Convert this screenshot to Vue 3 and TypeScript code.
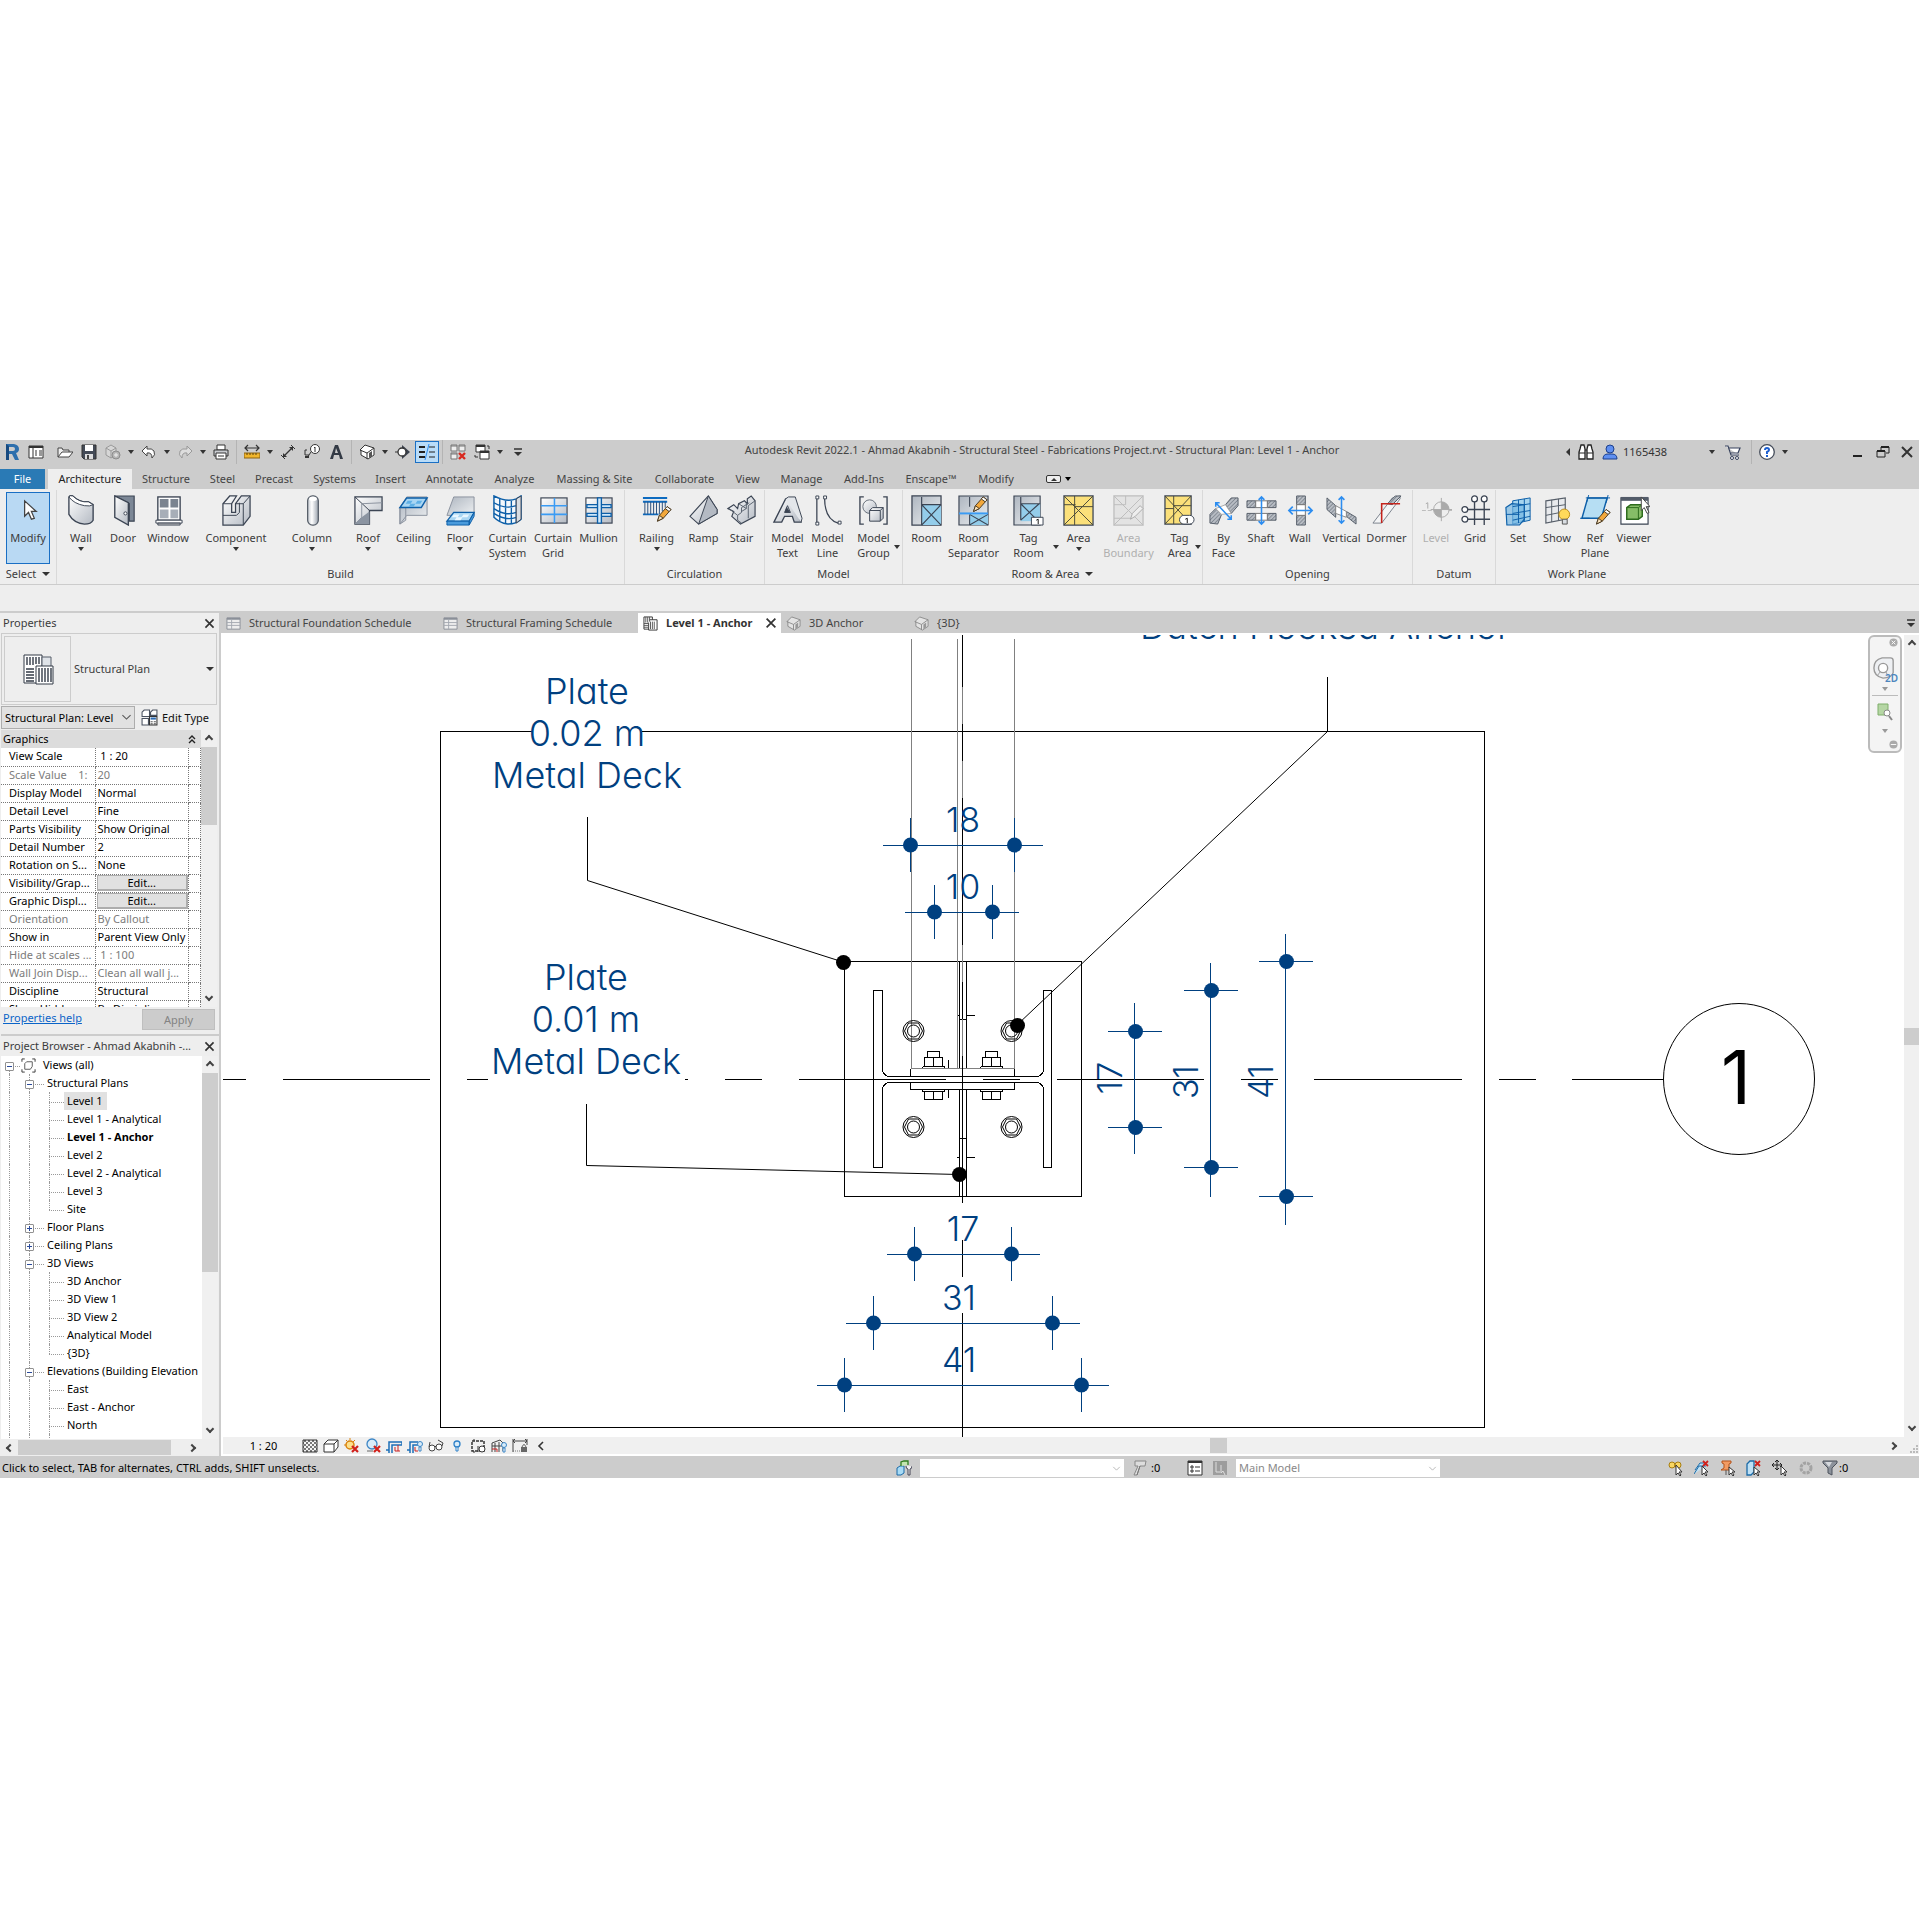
<script setup lang="ts">
import { ref } from 'vue'

interface Tool {
  label: string[]
  icon: string
  w: number
  menu?: 'below' | 'beside'
  off?: boolean
  on?: boolean
}
interface Group {
  name: string
  w: number
  menu?: boolean
  tools: Tool[]
}

const pencil = '<path d="M17 27l2-6 8-9 4 3-8 9z" fill="#f3a83b" stroke="#4a3a20"/><path d="M25 14l4 3 2-2-4-3z" fill="#fff" stroke="#4a3a20"/><path d="M19 21l4 3-6 3z" fill="#fbe3bd" stroke="#4a3a20"/>'
const slice = 'fill="url(#hatch)" stroke="#555d68"'

/* Ribbon icons, drawn on a 32 x 32 grid */
const big: Record<string, string> = {
  modify: '<path d="M12 6v16l4-4 3 7 3-1-3-7h5z" fill="#fff" stroke="#444" stroke-width="1.3"/>',
  wall: '<path d="M3 2q1-2 4-1 7 7 16 6l5 3v16q-2 4-9 4Q8 29 3 20z" fill="url(#metal)" stroke="#3b4453" stroke-width="1.4"/><path d="M3 2q1-2 4-1 7 7 16 6l5 3q-3 2-9 1Q8 9 3 2z" fill="#fff" stroke="#3b4453"/>',
  door: '<path d="M7 1h20v26h-5V9L7 1z" fill="#7c8796" stroke="#3b4453" stroke-width="1.2"/><path d="M7 1v22l14 8V8z" fill="url(#metal)" stroke="#3b4453" stroke-width="1.4"/><circle cx="18" cy="19" r="1.6" fill="#fff" stroke="#3b4453"/>',
  window: '<rect x="5" y="2" width="23" height="24" fill="#fff" stroke="#3b4453" stroke-width="1.4"/><path d="M7 4h9v9H7zM18 4h8v9h-8z" fill="#7b8490"/><path d="M7 15h9v9H7zM18 15h8v9h-8z" fill="#a7aeb8"/><path d="M3 26h27v3H3z" fill="#fff" stroke="#3b4453"/><path d="M5 29h23v2H5z" fill="#ccc" stroke="#3b4453"/>',
  component: '<path d="M2 19V9l7-8h7l-5 8v9h4V9l6-8h9v21l-7 9H2z" fill="url(#metal)" stroke="#3b4453" stroke-width="1.3"/><path d="M2 9h9M15 9h8l7-8M23 9v22M2 21h14l3-3V8" fill="none" stroke="#3b4453"/>',
  column: '<rect x="11" y="1" width="11" height="30" rx="5" fill="url(#pipe)" stroke="#555d68" stroke-width="1.3"/><ellipse cx="16.500" cy="4" rx="4" ry="2.200" fill="#fff"/>',
  roof: '<path d="M2 2h28v14H17v14H2z" fill="url(#metal)" stroke="#3b4453" stroke-width="1.3"/><path d="M2 2l15 14" stroke="#3b4453"/><path d="M9 9l21-1M9 9v14l-7 7" stroke="#8a929e" fill="none"/><path d="M9 23l8-6v13H2z" fill="#8b94a1"/>',
  ceiling: '<path d="M2 13h6v13l-6 4zM2 13L9 2h21v19H9l-7 9z" fill="url(#flat)" stroke="#8a929e"/><path d="M9 3h21l-6 10H2z" fill="#a9d6f3" stroke="#0d5fa8" stroke-width="1.5"/><path d="M10 6h5l-2 3H8zM20 6h5l-2 3h-5zM13 9h5l-2 3h-5z" fill="#5fb0e6"/>',
  floor: '<path d="M2 21L9 2h21v19z" fill="url(#flat)" stroke="#8a929e"/><path d="M2 27l7-9h21l-5 9z" fill="#a9d6f3" stroke="#0d5fa8" stroke-width="1.300"/><path d="M2 27h23v4H2zM25 27l5-9v4l-5 9z" fill="#4a9bdc" stroke="#0d5fa8"/><path d="M9 20h6l-2 3H7zM19 20h6l-2 3h-6zM12 23h6l-2 3h-6z" fill="#e8f6ff"/>',
  cursys: '<path d="M2 1q13 7 23 3l5-3v24q-5 5-14 5Q8 29 2 23z" fill="#f4f8fc" stroke="#0d5fa8" stroke-width="1.500"/><path d="M2 8q12 7 23 3M2 14q12 8 23 4M2 19q12 8 23 4M8 4v23M14 6v24M20 6v24M25 4v25" fill="none" stroke="#0d5fa8" stroke-width="1.400"/><path d="M25 4l5-3v24l-5 4z" fill="#d9dde2" stroke="#3b4453"/>',
  curgrid: '<rect x="3" y="3" width="27" height="26" fill="url(#metal)" stroke="#3b4453" stroke-width="1.200"/><path d="M3 11h27M3 20h27M17 3v26" stroke="#3a9bf4" stroke-width="1.600"/>',
  mullion: '<rect x="3" y="3" width="27" height="26" fill="url(#metal)" stroke="#3b4453" stroke-width="1.200"/><path d="M4 10h25v3H4zM4 19h25v3H4z" fill="#cfe8fb" stroke="#0d5fa8" stroke-width="1.400"/><path d="M15 3h4v26h-4z" fill="#cfe8fb" stroke="#0d5fa8" stroke-width="1.400"/>',
  railing: '<path d="M2 3h25M2 7h25M2 20h16" stroke="#0d6bc0" stroke-width="2"/><path d="M4 7v13M7 7v13M10 7v13M13 7v13M16 7v13M19 7v13M22 7v10M25 7v6" stroke="#2a4f7c" stroke-width="1"/>' + pencil,
  ramp: '<path d="M2 22L21 1l9 14v4L11 30z" fill="url(#metal)" stroke="#3b4453" stroke-width="1.200"/><path d="M21 1l9 14v4L11 30z" fill="#b4bac3" stroke="#3b4453"/>',
  stair: '<path d="M2 14l6-4 4 4 1-5 6-3 3 3v-5l4-3 4 5v16L15 30 6 22l2-5z" fill="url(#metal)" stroke="#3b4453" stroke-width="1.200"/><path d="M3 14l9 7 4-3v-5l8-5M12 21v5l4 3M13 9l8 5-5 3M21 14V8M30 6l-7 5v13" fill="none" stroke="#5a6370"/>',
  mtext: '<path d="M2 28L14 4h8l8 24h-7l-2-6h-8l-3 6z" fill="url(#metal)" stroke="#3b4453" stroke-width="1.400"/><path d="M14 4l3-2h7l7 22-1 4M16 11l-3 7h6z" fill="#e3e6ea" stroke="#3b4453"/><path d="M15 12l-2 6h6z" fill="#3b4453"/>',
  mline: '<path d="M5 3v26M13 3q0 22 14 26" fill="none" stroke="#3b4453" stroke-width="1.300"/><path d="M4 1h3v3H4zM4 28h3v3H4zM12 1h3v3h-3zM27 27h3v3h-3z" fill="#fff" stroke="#3b4453"/>',
  mgroup: '<path d="M6 2H2v28h4M26 2h4v28h-4" fill="none" stroke="#3b4453" stroke-width="1.400"/><circle cx="12" cy="12" r="7" fill="url(#metal)" stroke="#666e7a"/><path d="M12 16l3-3h11v11l-3 3H12z" fill="url(#metal)" stroke="#3b4453"/><path d="M12 16h11v11M23 16l3-3" fill="none" stroke="#3b4453"/>',
  room: '<path d="M1 1h30v30H1z" fill="url(#flat)" stroke="#3b4453" stroke-width="1.300"/><path d="M11 10h20v21H11z" fill="#94cdea"/><path d="M11 2v29M11 10h20M11 10l20 21M31 10L11 31" stroke="#3b4453" stroke-width="1.200"/>',
  roomsep: '<path d="M1 1h30v30H1z" fill="url(#flat)" stroke="#3b4453" stroke-width="1.200"/><path d="M12 20h19v11H12z" fill="#94cdea"/><path d="M12 2v10M12 20l19 11M31 20L12 31M12 20v11" stroke="#3b4453" stroke-width="1.100"/><path d="M1 19h30" stroke="#3a9bf4" stroke-width="2"/><g transform="translate(-1 -10)">' + pencil + '</g>',
  roomtag: '<path d="M1 1h27v30H1z" fill="url(#flat)" stroke="#3b4453" stroke-width="1.200"/><path d="M8 9h20v18H8z" fill="#94cdea"/><path d="M8 2v24M8 9h20M8 9l18 18M27 9L8 26" stroke="#3b4453" stroke-width="1.200"/><path d="M19 23h12v8H19z" fill="#fff" stroke="#3b4453"/><path d="M24 26l2-1v5" stroke="#111" fill="none"/>',
  area: '<path d="M1 1h30v30H1z" fill="#fbe07a" stroke="#3b4453" stroke-width="1.300"/><path d="M1 1l30 30M31 1L1 31M12 1v11h19M12 12v19M1 10h12" stroke="#4a4a3a" fill="none"/>',
  areabound: '<path d="M1 1h30v30H1z" fill="#e3e3e3" stroke="#bdbdbd" stroke-width="1.300"/><path d="M1 1l30 30M31 1L1 31M1 10h12V1M1 24h18" stroke="#bdbdbd" fill="none"/><path d="M18 25l2-6 8-8 3 3-8 8z" fill="#eee" stroke="#aaa"/>',
  areatag: '<path d="M1 1h27v29H1z" fill="#fbe07a" stroke="#3b4453" stroke-width="1.300"/><path d="M1 1l27 29M28 1L1 30M10 1v29M10 11h18M1 14h9" stroke="#4a4a3a" fill="none"/><rect x="16" y="21" width="15" height="9" rx="4.500" fill="#fff" stroke="#3b4453"/><path d="M22 25l2-1v5" stroke="#111" fill="none"/>',
  byface: `<path d="M2 29v-9l6-6 6 6-4 10z" ${slice}/><path d="M18 10l6-7h7v8l-7 8z" ${slice}/><path d="M8 14l10-4 6 9-10 1z" fill="#fff" stroke="#aaa"/><path d="M8 8l16 17M8 12V8h4M24 21v4h-4" fill="none" stroke="#2c8df0" stroke-width="1.600"/>`,
  shaft: `<path d="M1 6h9v7H1zM22 6h9v7h-9zM1 19h9v7H1zM22 19h9v7h-9z" ${slice}/><path d="M10 6h12v7H10zM10 19h12v7H10z" fill="#fff" stroke="#777"/><path d="M16 2v28M13 5l3-3 3 3M13 27l3 3 3-3" fill="none" stroke="#2c8df0" stroke-width="1.600"/>`,
  opwall: `<path d="M12 1h9v9h-9zM12 21h9v10h-9z" ${slice}/><path d="M12 10h9v11h-9z" fill="#fff" stroke="#777"/><path d="M4 16h24M8 12l-4 4 4 4M24 12l4 4-4 4" fill="none" stroke="#2c8df0" stroke-width="1.700"/>`,
  vertical: `<path d="M1 3l9 8v12l-9-8zM21 17l10 6v7l-10-8z" ${slice}/><path d="M10 11l11 6v6l-11-4z" fill="#fff" stroke="#888"/><path d="M16 2v27M13 5l3-3 3 3M13 26l3 3 3-3" fill="none" stroke="#2c8df0" stroke-width="1.600"/>`,
  dormer: `<path d="M2 29L22 3l8-2v3L11 29z" fill="#f3f4f5" stroke="#7b828c"/><path d="M17 9l8-8h6l-9 9z" ${slice}/><path d="M30 9H11v20" fill="none" stroke="#c4221b" stroke-width="1.600"/>`,
  level: '<path d="M1 16h13M29 16h3" stroke="#bbb" stroke-dasharray="4 2"/><path d="M5 9l2-1v6" stroke="#aaa" fill="none"/><circle cx="21" cy="15" r="8" fill="#eee" stroke="#aaa"/><path d="M21 7v8h8a8 8 0 0 0-8-8zM21 23v-8h-8a8 8 0 0 0 8 8z" fill="#aaa"/><path d="M21 3v24M10 15h22" stroke="#aaa"/>',
  grid: '<path d="M15 6v25M25 6v25M8 15h23M8 25h23" stroke="#3b4453" stroke-width="1.400"/><g fill="#fff" stroke="#3b4453" stroke-width="1.300"><circle cx="15" cy="4" r="3"/><circle cx="25" cy="4" r="3"/><circle cx="5" cy="15" r="3"/><circle cx="5" cy="25" r="3"/></g>',
  set: '<path d="M10 6l18-3v23l-18 4z" fill="#a6d5ef" stroke="#0d5fa8"/><path d="M3 13l6-4 13 1v15l-5 6H4z" fill="#75b7e3" fill-opacity=".7" stroke="#0d5fa8" stroke-width="1.200"/><path d="M16 5v24M22 4v23M10 12l18-3M10 19l18-3M3 20h14M10 26l18-4" stroke="#0d5fa8" fill="none"/>',
  show: '<path d="M4 6l20-3v22L4 29z" fill="#e8eaed" stroke="#555d68" stroke-width="1.200"/><path d="M10 5v23M17 4v22M4 13l20-3M4 21l20-4" stroke="#555d68" fill="none"/><circle cx="23" cy="20" r="5.500" fill="#ffd95a" stroke="#b88a1c"/><path d="M21 25h5v5h-5z" fill="#d8dde2" stroke="#555"/>',
  refplane: '<path d="M8 3h20l-6 21H2z" fill="#b6def3" stroke="#0d5fa8" stroke-width="1.500"/><path d="M6 3h25M0 24h10M29 0l-2 8M9 0L7 7" stroke="#0d5fa8"/><g transform="translate(0 3)">' + pencil + '</g>',
  viewer: '<path d="M2 3h28v27H2z" fill="#fff" stroke="#3b4453" stroke-width="1.200"/><path d="M2 2h28v4H2z" fill="#525b69"/><path d="M8 13l4-3h12v12l-4 3H8z" fill="#86bd67" stroke="#2c6b1c" stroke-width="1.500"/><path d="M8 13h12v12M20 13l4-3" fill="none" stroke="#2c6b1c"/><path d="M23 2v14l3-3 3 6 2-1-3-6h4z" fill="#fff" stroke="#444"/>',
}

/* Bar icons, drawn on a 16 x 16 grid */
const small: Record<string, string> = {
  revit: '<path d="M2 0h8q5 1 5 5 0 3-3 4l3 7h-4L8 10H5v6H2z" fill="#2d6fad"/><path d="M2 0l3 2v14H2z" fill="#174a80"/><path d="M5 3h4q2 0 2 2t-2 2H5z" fill="#ccc"/>',
  home: '<path d="M1 2h14v12H1z" fill="#fff" stroke="#333"/><path d="M1 2h14v2H1z" fill="#333"/><path d="M5 4v10M7 7h2M11 7h3M7 9h2M11 9h3M7 11h2M11 11h3" stroke="#333"/>',
  open: '<path d="M1 13V4h4l1 2h6v2" fill="#eee" stroke="#444"/><path d="M1 13l4-5h11l-4 5z" fill="#fff" stroke="#444"/>',
  save: '<path d="M1 1h14v14H3l-2-2z" fill="#444b57" stroke="#333"/><path d="M4 1h8v6H4z" fill="#fff"/><path d="M4 10h8v5H4z" fill="#ddd"/><path d="M6 11h2v4H6z" fill="#444"/>',
  sync: '<path d="M1 4l5-3 5 3v7l-5 3-5-3z" fill="#d6d6d6" stroke="#999"/><path d="M1 4l5 3 5-3M6 7v7" stroke="#999" fill="none"/><circle cx="11" cy="11" r="4" fill="#b5b5b5" stroke="#8c8c8c"/><path d="M9 11h4M11 9v4" stroke="#eee"/>',
  undo: '<path d="M6 2L1 7l5 5V9q5-1 5 5 4-3 2-7-2-3-7-2z" fill="#fff" stroke="#444"/>',
  redo: '<path d="M10 2l5 5-5 5V9q-5-1-5 5-4-3-2-7 2-3 7-2z" fill="#ddd" stroke="#999"/>',
  print: '<path d="M4 1h8v5H4z" fill="#fff" stroke="#333"/><path d="M1 6h14v6H1z" fill="#c9ccd1" stroke="#333"/><path d="M3 9h10v6H3z" fill="#fff" stroke="#333"/><path d="M5 12h6" stroke="#333"/>',
  measure: '<path d="M1 4h14M4 1L1 4l3 3M12 1l3 3-3 3" fill="none" stroke="#333" stroke-width="1.200"/><path d="M0 9h16v5H0z" fill="#f0b52c" stroke="#8c6210"/><path d="M3 9v2M6 9v2M9 9v2M12 9v2" stroke="#5b400b"/>',
  dim: '<path d="M4 12l8-8" stroke="#333" stroke-width="1.300"/><path d="M3 9v4h4zM9 3h4v4z" fill="#333"/><path d="M1 11l4 4M11 1l4 4" stroke="#333"/>',
  tag: '<circle cx="11" cy="5" r="4.500" fill="#fff" stroke="#333"/><path d="M10 4l1-1v5M3 6H1v5h4M7 8l-4 6" fill="none" stroke="#333"/><path d="M1 13h4" stroke="#333" stroke-width="2"/>',
  text: '<path d="M2 15L7 1h3l5 14h-3l-1-4H6l-1 4zM7 9h3L8 4z" fill="#333a45" fill-rule="evenodd"/>',
  house: '<path d="M1 6l5-5 9 3v7l-6 4-7-4V6z" fill="#fff" stroke="#333"/><path d="M1 6l7 3 7-5M8 9v6" fill="none" stroke="#333"/><path d="M10 9l3-2v5l-3 2z" fill="#555"/>',
  section: '<path d="M7 1l8 7-8 7z" fill="#3b4350"/><circle cx="7" cy="8" r="4" fill="#fff" stroke="#333" stroke-width="1.300"/><path d="M0 8h3" stroke="#333"/>',
  thin: '<path d="M0 3h6M0 8h6M0 13h6" stroke="#222" stroke-width="2"/><path d="M10 3h6M10 8h6M10 13h6" stroke="#222"/><path d="M10 0L6 16" stroke="#2c8df0"/>',
  closehid: '<path d="M1 1h6v6H1zM9 1h6v6H9zM1 9h6v6H1z" fill="#eee" stroke="#777"/><path d="M1 2h6M9 2h6M1 10h6" stroke="#777"/><path d="M9 9l6 6M15 9l-6 6" stroke="#d8281e" stroke-width="2.400"/>',
  switch: '<path d="M2 1h9v7H2zM6 7h9v8H6z" fill="#fff" stroke="#333"/><path d="M2 2h9M6 8h9" stroke="#333" stroke-width="2"/><path d="M13 2h2v3M1 11v2h3" fill="none" stroke="#333"/>',
  custom: '<path d="M4 5h8" stroke="#333" stroke-width="1.500"/><path d="M4 8h8l-4 4z" fill="#333"/>',
  find: '<path d="M2 5l1-4h3l1 4v10H1V8zM14 5l-1-4h-3L9 5v10h6V8z" fill="#fff" stroke="#222" stroke-width="1.300"/><path d="M1 9h6M9 9h6M7 6h2" stroke="#222"/>',
  user: '<circle cx="8" cy="5" r="4" fill="#5f8ff0" stroke="#1c3f8c"/><path d="M1 15q0-5 5-5h4q5 0 5 5z" fill="#5f8ff0" stroke="#1c3f8c"/>',
  cart: '<path d="M0 2h3l3 9h8M4 4h11l-2 5H6" fill="#fff" stroke="#36415c" stroke-width="1.200"/><circle cx="7" cy="14" r="1.500" fill="#fff" stroke="#36415c"/><circle cx="12" cy="14" r="1.500" fill="#fff" stroke="#36415c"/>',
  help: '<circle cx="8" cy="8" r="7.300" fill="#fff" stroke="#444c5a" stroke-width="1.300"/><path d="M6 6q0-2 2-2t2 2q0 1-2 2v2M8 11v2" fill="none" stroke="#1b5ed0" stroke-width="2"/>',
  min: '<path d="M3 12h9" stroke="#222" stroke-width="2"/>',
  restore: '<path d="M6 6V3h8v6h-3" fill="none" stroke="#222"/><path d="M6 3h8" stroke="#222" stroke-width="2"/><path d="M2 7h8v6H2z" fill="none" stroke="#222"/><path d="M2 7h8" stroke="#222" stroke-width="2"/>',
  close: '<path d="M3 3l10 10M13 3L3 13" stroke="#333" stroke-width="2"/>',
  sched: '<path d="M1 2h14v12H1z" fill="#eee" stroke="#8a8f98"/><path d="M1 3h14" stroke="#8a8f98" stroke-width="2"/><path d="M1 7h14M1 10h14M6 3v11" stroke="#a4a9b1"/>',
  plan: '<path d="M1 1h9v13H1z" fill="#fff" stroke="#333"/><path d="M7 4h8v11H6V7" fill="#fff" stroke="#333"/><path d="M3 1v6M5 1v6M7 1v5M1 8h5M1 10h5M1 12h5M8 6v8M10 6v8M12 6v8" stroke="#555"/>',
  cube: '<path d="M1 6l5-5 9 3v7l-6 4-7-4V6z" fill="#e4e4e4" stroke="#8c8c8c"/><path d="M1 6l7 3 7-5M8 9v6" fill="none" stroke="#8c8c8c"/><path d="M10 9l3-2v5l-3 2z" fill="#999"/>',
  etype: '<path d="M1 3l2-2h5v6H1zM9 3l2-2h4v5H9zM1 9h6v6H1z" fill="#fff" stroke="#4a5260"/><path d="M8 7h7v8H8z" fill="#fff" stroke="#333"/><path d="M9 8h5v2H9z" fill="#2a6bb5"/><path d="M9 12h2M12 12h2M9 14h2M12 14h2" stroke="#555"/>',
  fine: '<path d="M1 2h14v12H1z" fill="url(#checks)" stroke="#333"/>',
  visual: '<path d="M1 6l4-4h10v7l-4 5H1z" fill="#fff" stroke="#333"/><path d="M1 6h10v8M11 6l4-4" fill="none" stroke="#333"/>',
  sun: '<circle cx="6" cy="7" r="4" fill="#fde08a" stroke="#d9820f" stroke-width="1.500"/><path d="M6 0v2M0 7h2M2 2l1 1M11 2L9 4" stroke="#d9820f"/><path d="M8 8l6 6M14 8l-6 6" stroke="#d0211c" stroke-width="2.200"/>',
  shadow: '<circle cx="7" cy="6" r="5" fill="#d9ecf9" stroke="#3d86c6" stroke-width="1.300"/><path d="M2 13h6" stroke="#666"/><path d="M9 8l6 6M15 8l-6 6" stroke="#d0211c" stroke-width="2.200"/>',
  crop: '<path d="M3 15V4h13v3H6v8M0 12h3" fill="none" stroke="#1d6fb8" stroke-width="1.500"/><path d="M9 9v4h5M12 7v6" fill="none" stroke="#c22"/>',
  cropreg: '<path d="M3 15V4h8M6 15V7h5M0 12h3" fill="none" stroke="#1d6fb8" stroke-width="1.500"/><path d="M8 9v4h3" fill="none" stroke="#c22"/><circle cx="13" cy="6" r="2.500" fill="#d9ecf9" stroke="#3d86c6"/><path d="M12 9h2v4h-2z" fill="#fff" stroke="#3d86c6"/>',
  glasses: '<circle cx="4" cy="10" r="3" fill="#fff" stroke="#444"/><circle cx="11" cy="9" r="3" fill="#fff" stroke="#444"/><path d="M1 9L2 4M7 9l1-1M14 8l1-3-5-3" fill="none" stroke="#444"/>',
  bulb: '<circle cx="8" cy="6" r="3" fill="#d9ecf9" stroke="#2d80c8" stroke-width="1.300"/><path d="M7 9h2v4H7z" fill="#fff" stroke="#2d80c8"/>',
  constraint: '<path d="M2 3h12v10H2z" fill="none" stroke="#333" stroke-width="1.500" stroke-dasharray="3 1"/><circle cx="12" cy="11" r="3" fill="#fff" stroke="#333"/><path d="M8 8v6M4 3V1M4 15v-2" stroke="#333"/>',
  model: '<path d="M1 5l8-3 3 3v8M1 5v9M4 5v9M1 8h10M8 4v10" fill="none" stroke="#444"/><path d="M1 11h5v3" stroke="#c22" fill="none"/><circle cx="13" cy="7" r="2.500" fill="#d9ecf9" stroke="#3d86c6"/><path d="M12 10h2v4h-2z" fill="#fff" stroke="#3d86c6"/>',
  reveal: '<path d="M1 1v13M15 1v6M1 3h14M3 1L1 3l2 2M13 1l2 2-2 2" fill="none" stroke="#444"/><path d="M1 13h7" stroke="#777" stroke-dasharray="1 1"/><path d="M9 9h6v5H9z" fill="#666"/><path d="M10 9q2-5 4 0" fill="none" stroke="#666"/>',
  chevl: '<path d="M10 4L6 8l4 4" fill="none" stroke="#333" stroke-width="1.600"/>',
  workset: '<path d="M1 8l3-2h4v7l-3 2H1z" fill="#a8dbf5" stroke="#1b6ba8"/><path d="M5 6V2l3-1h4v4" fill="#c4e6b0" stroke="#2f7d1f" stroke-width="1.300"/><path d="M10 6q0 3 2 3v6h2V9q2 0 2-3" fill="#eee" stroke="#445"/>',
  editable: '<path d="M3 1h11l-1 5H8l-3 9H2l4-9H3z" fill="#ddd" stroke="#888"/><path d="M8 6l-3 9" stroke="#777"/>',
  option: '<path d="M1 1h14v14H1z" fill="#fff" stroke="#333"/><path d="M1 2h14" stroke="#333" stroke-width="2"/><path d="M4 6h2v2H4zM4 10h2v2H4z" fill="none" stroke="#333"/><path d="M8 7h5M8 11h5" stroke="#333"/>',
  optoff: '<path d="M1 1h14v14H1z" fill="#9d9d9d"/><path d="M4 2v10h4M9 5v8l2-2 2 4" fill="none" stroke="#ddd"/>',
  link: '<circle cx="4" cy="5" r="3" fill="#f8d662" stroke="#a87e10"/><circle cx="10" cy="5" r="3" fill="#f8d662" stroke="#a87e10"/><path d="M8 5v10l2-2 2 3 1-1-2-3h3z" fill="#fff" stroke="#333"/>',
  underlay: '<path d="M0 14l5-8h7M1 10l5-7h6" fill="#bfe0f4" stroke="#1b6ba8"/><path d="M9 1l5 5M14 1L9 6" stroke="#d0211c" stroke-width="1.800"/><path d="M8 6v9l2-2 2 3 1-1-2-3h3z" fill="#fff" stroke="#333"/>',
  pin: '<path d="M2 1h9v2l-2 1v4l3 2H1l3-2V4L2 3z" fill="#f29b62" stroke="#b4531a"/><path d="M6 10v5" stroke="#555"/><path d="M9 7v8l2-2 2 3 1-1-2-3h3z" fill="#fff" stroke="#333"/>',
  face: '<path d="M1 4l3-3h4v11l-3 3H1z" fill="#bfe0f4" stroke="#1b6ba8" stroke-width="1.300"/><path d="M9 1l5 5M14 1L9 6" stroke="#d0211c" stroke-width="1.800"/><path d="M8 7v8l2-2 2 3 1-1-2-3h3z" fill="#fff" stroke="#333"/>',
  drag: '<path d="M5 0v10M0 5h10M3 2l2-2 2 2M3 8l2 2 2-2M2 3L0 5l2 2M8 3l2 2-2 2" fill="none" stroke="#222"/><path d="M9 6v9l2-2 2 3 1-1-2-3h3z" fill="#fff" stroke="#333"/>',
  busy: '<circle cx="8" cy="8" r="5" fill="none" stroke="#a3a3a3" stroke-width="3" stroke-dasharray="3 1"/>',
  filter: '<path d="M1 1h14v2L10 8v7l-4-2V8L1 3z" fill="#8c929b" stroke="#4c525c"/><path d="M3 2h7L7 7z" fill="#d5d8dd"/>',
  views: '<path d="M4 1H1v3M12 1h3v3M4 15H1v-3M12 15h3v-3" fill="none" stroke="#333"/><path d="M4 6l2-2h6v5l-2 3H4z" fill="#fff" stroke="#555"/>',
}

const tabs = [
  ['Structure', 68], ['Steel', 45], ['Precast', 58], ['Systems', 63], ['Insert', 49],
  ['Annotate', 69], ['Analyze', 61], ['Massing & Site', 99], ['Collaborate', 81], ['View', 45],
  ['Manage', 63], ['Add-Ins', 62], ['Enscape™', 72], ['Modify', 58],
] as [string, number][]

const groups: Group[] = [
  { name: 'Select', w: 57, menu: true, tools: [{ label: ['Modify'], icon: 'modify', w: 44, on: true }] },
  { name: 'Build', w: 568, tools: [
    { label: ['Wall'], icon: 'wall', w: 42, menu: 'below' },
    { label: ['Door'], icon: 'door', w: 42 },
    { label: ['Window'], icon: 'window', w: 48 },
    { label: ['Component'], icon: 'component', w: 88, menu: 'below' },
    { label: ['Column'], icon: 'column', w: 64, menu: 'below' },
    { label: ['Roof'], icon: 'roof', w: 48, menu: 'below' },
    { label: ['Ceiling'], icon: 'ceiling', w: 43 },
    { label: ['Floor'], icon: 'floor', w: 50, menu: 'below' },
    { label: ['Curtain', 'System'], icon: 'cursys', w: 45 },
    { label: ['Curtain', 'Grid'], icon: 'curgrid', w: 46 },
    { label: ['Mullion'], icon: 'mullion', w: 45 },
  ] },
  { name: 'Circulation', w: 140, tools: [
    { label: ['Railing'], icon: 'railing', w: 54, menu: 'below' },
    { label: ['Ramp'], icon: 'ramp', w: 40 },
    { label: ['Stair'], icon: 'stair', w: 36 },
  ] },
  { name: 'Model', w: 138, tools: [
    { label: ['Model', 'Text'], icon: 'mtext', w: 40 },
    { label: ['Model', 'Line'], icon: 'mline', w: 40 },
    { label: ['Model', 'Group'], icon: 'mgroup', w: 52, menu: 'beside' },
  ] },
  { name: 'Room & Area', w: 300, menu: true, tools: [
    { label: ['Room'], icon: 'room', w: 44 },
    { label: ['Room', 'Separator'], icon: 'roomsep', w: 50 },
    { label: ['Tag', 'Room'], icon: 'roomtag', w: 60, menu: 'beside' },
    { label: ['Area'], icon: 'area', w: 40, menu: 'below' },
    { label: ['Area', 'Boundary'], icon: 'areabound', w: 60, off: true },
    { label: ['Tag', 'Area'], icon: 'areatag', w: 42, menu: 'beside' },
  ] },
  { name: 'Opening', w: 210, tools: [
    { label: ['By', 'Face'], icon: 'byface', w: 38 },
    { label: ['Shaft'], icon: 'shaft', w: 37 },
    { label: ['Wall'], icon: 'opwall', w: 41 },
    { label: ['Vertical'], icon: 'vertical', w: 42 },
    { label: ['Dormer'], icon: 'dormer', w: 48 },
  ] },
  { name: 'Datum', w: 83, tools: [
    { label: ['Level'], icon: 'level', w: 42, off: true },
    { label: ['Grid'], icon: 'grid', w: 36 },
  ] },
  { name: 'Work Plane', w: 162, tools: [
    { label: ['Set'], icon: 'set', w: 38 },
    { label: ['Show'], icon: 'show', w: 40 },
    { label: ['Ref', 'Plane'], icon: 'refplane', w: 36 },
    { label: ['Viewer'], icon: 'viewer', w: 42 },
  ] },
]

/* '>' is a drop-down arrow, '|' a divider */
const quick = ['open', 'save', 'sync', '>', 'undo', '>', 'redo', '>', 'print', '|', 'measure', '>', 'dim', 'tag', 'text', '|', 'house', '>', 'section', 'thin', '|', 'closehid', 'switch', '>', 'custom']

const docs = [
  { name: 'Structural Foundation Schedule', icon: 'sched', w: 217 },
  { name: 'Structural Framing Schedule', icon: 'sched', w: 200 },
  { name: 'Level 1 - Anchor', icon: 'plan', w: 143, on: true },
  { name: '3D Anchor', icon: 'cube', w: 128 },
  { name: '{3D}', icon: 'cube', w: 100 },
]

const props = [
  ['View Scale', ' 1 : 20', ''], ['Scale Value    1:', '20', 'dim'], ['Display Model', 'Normal', ''],
  ['Detail Level', 'Fine', ''], ['Parts Visibility', 'Show Original', ''], ['Detail Number', '2', ''],
  ['Rotation on S...', 'None', ''], ['Visibility/Grap...', 'Edit...', 'action'], ['Graphic Displ...', 'Edit...', 'action'],
  ['Orientation', 'By Callout', 'dim'], ['Show in', 'Parent View Only', ''], ['Hide at scales ...', ' 1 : 100', 'dim'],
  ['Wall Join Disp...', 'Clean all wall j...', 'dim'], ['Discipline', 'Structural', ''], ['Show Hidden...', 'By Discipline', ''],
]

interface Node { t: string; lvl: number; tog?: '-' | '+'; last?: boolean; cls?: string }
const tree: Node[] = [
  { t: 'Views (all)', lvl: 0, tog: '-' },
  { t: 'Structural Plans', lvl: 1, tog: '-' },
  { t: 'Level 1', lvl: 2, cls: 'picked' },
  { t: 'Level 1 - Analytical', lvl: 2 },
  { t: 'Level 1 - Anchor', lvl: 2, cls: 'current' },
  { t: 'Level 2', lvl: 2 },
  { t: 'Level 2 - Analytical', lvl: 2 },
  { t: 'Level 3', lvl: 2 },
  { t: 'Site', lvl: 2, last: true },
  { t: 'Floor Plans', lvl: 1, tog: '+' },
  { t: 'Ceiling Plans', lvl: 1, tog: '+' },
  { t: '3D Views', lvl: 1, tog: '-' },
  { t: '3D Anchor', lvl: 2 },
  { t: '3D View 1', lvl: 2 },
  { t: '3D View 2', lvl: 2 },
  { t: 'Analytical Model', lvl: 2 },
  { t: '{3D}', lvl: 2, last: true },
  { t: 'Elevations (Building Elevation', lvl: 1, tog: '-' },
  { t: 'East', lvl: 2 },
  { t: 'East - Anchor', lvl: 2 },
  { t: 'North', lvl: 2 },
]

const viewTools = ['fine', 'visual', 'sun', 'shadow', 'crop', 'cropreg', 'glasses', 'bulb', 'constraint', 'model', 'reveal', 'chevl']
const selectTools = ['link', 'underlay', 'pin', 'face', 'drag', 'busy']

/* Horizontal dimensions: label, line y, line ends, witness positions, label x */
const across = [
  { n: '18', y: 845, a: 883, b: 1043, p: [910, 1014], tx: 963 },
  { n: '10', y: 912, a: 905, b: 1019, p: [934, 992], tx: 963 },
  { n: '17', y: 1254, a: 887, b: 1040, p: [914, 1011], tx: 963 },
  { n: '31', y: 1323, a: 846, b: 1080, p: [873, 1052], tx: 959 },
  { n: '41', y: 1385, a: 817, b: 1109, p: [844, 1081], tx: 959 },
]
/* Vertical dimensions: label, line x, line ends, witness positions, label y */
const upright = [
  { n: '17', x: 1135, a: 1003, b: 1154, p: [1031, 1127], ty: 1078 },
  { n: '31', x: 1211, a: 963, b: 1197, p: [990, 1167], ty: 1082 },
  { n: '41', x: 1286, a: 934, b: 1225, p: [961, 1196], ty: 1082 },
]
const gridDashes = [[223, 246], [283, 430], [467, 488], [685, 688], [725, 762], [799, 946], [983, 1020], [1057, 1204], [1241, 1278], [1314, 1462], [1499, 1536], [1572, 1663]]
const axisDashes = [[635, 687], [724, 761], [798, 945], [982, 1019], [1056, 1203], [1240, 1277], [1313, 1437]]
const anchors = [[913, 1031], [1011, 1031], [913, 1127], [1011, 1127]]
const notes = [
  { x: 587, y: 704, lines: ['Plate', '0.02 m', 'Metal Deck'] },
  { x: 586, y: 990, lines: ['Plate', '0.01 m', 'Metal Deck'] },
]

const typeName = ref('Structural Plan: Level')
const optionSet = ref('Main Model')
</script>

<template>
  <div class="app">
    <svg class="defs" aria-hidden="true">
      <defs>
        <linearGradient id="metal" x1="0" y1="0" x2="1" y2="1"><stop offset="0" stop-color="#fff" /><stop offset="1" stop-color="#b4bac3" /></linearGradient>
        <linearGradient id="flat" x1="0" y1="0" x2="1" y2="1"><stop offset="0" stop-color="#aeb6c0" /><stop offset="1" stop-color="#eef0f2" /></linearGradient>
        <linearGradient id="pipe"><stop offset="0" stop-color="#c5cad1" /><stop offset=".4" stop-color="#fff" /><stop offset="1" stop-color="#9aa2ad" /></linearGradient>
        <pattern id="hatch" width="4" height="4" patternUnits="userSpaceOnUse"><path d="M0 0h4v4H0z" fill="#b9bec5" /><path d="M0 4L4 0" stroke="#6d7580" /></pattern>
        <pattern id="checks" width="4" height="4" patternUnits="userSpaceOnUse"><path d="M0 0h4v4H0z" fill="#f4f4f4" /><path d="M0 0h2v2H0zM2 2h2v2H2z" fill="#777" /></pattern>
      </defs>
    </svg>

    <header class="titlebar">
      <div class="quick">
        <button class="ib" aria-label="Revit"><svg viewBox="0 0 16 16" v-html="small.revit" /></button>
        <button class="ib home" aria-label="Home"><svg viewBox="0 0 16 16" v-html="small.home" /></button>
        <template v-for="(q, i) in quick" :key="i">
          <button v-if="q === '>'" class="drop" aria-label="More"><i class="caret" /></button>
          <span v-else-if="q === '|'" class="sep" />
          <button v-else class="ib" :class="{ on: q === 'thin' }" :aria-label="q"><svg viewBox="0 0 16 16" v-html="small[q]" /></button>
        </template>
      </div>
      <div class="title">Autodesk Revit 2022.1 - Ahmad Akabnih - Structural Steel - Fabrications Project.rvt - Structural Plan: Level 1 - Anchor</div>
      <div class="account">
        <i class="caret left" />
        <button class="ib" aria-label="Search"><svg viewBox="0 0 16 16" v-html="small.find" /></button>
        <button class="ib" aria-label="User"><svg viewBox="0 0 16 16" v-html="small.user" /></button>
        <span class="uid">1165438</span>
        <button class="drop" aria-label="Account menu"><i class="caret" /></button>
        <button class="ib cart" aria-label="Store"><svg viewBox="0 0 16 16" v-html="small.cart" /></button>
        <span class="sep" />
        <button class="ib" aria-label="Help"><svg viewBox="0 0 16 16" v-html="small.help" /></button>
        <button class="drop" aria-label="Help menu"><i class="caret" /></button>
      </div>
      <div class="wincontrols">
        <button class="ib" aria-label="Minimize"><svg viewBox="0 0 16 16" v-html="small.min" /></button>
        <button class="ib" aria-label="Restore"><svg viewBox="0 0 16 16" v-html="small.restore" /></button>
        <button class="ib" aria-label="Close"><svg viewBox="0 0 16 16" v-html="small.close" /></button>
      </div>
    </header>

    <nav class="tabs">
      <button class="tab file">File</button>
      <button class="tab active">Architecture</button>
      <button v-for="[t, w] in tabs" :key="t" class="tab" :style="{ width: w + 'px' }">{{ t }}</button>
      <button class="tab fold" aria-label="Minimize ribbon"><span class="foldbox"><i class="caret up" /></span><i class="caret black" /></button>
    </nav>

    <section class="ribbon">
      <div v-for="g in groups" :key="g.name" class="group" :style="{ width: g.w + 'px' }">
        <div class="tools">
          <button v-for="(t, i) in g.tools" :key="i" class="tool" :class="{ off: t.off, on: t.on }" :style="{ width: t.w + 'px' }">
            <svg viewBox="0 0 32 32" v-html="big[t.icon]" />
            <span v-for="l in t.label" :key="l" class="tl">{{ l }}</span>
            <i v-if="t.menu" class="caret" :class="t.menu" />
          </button>
        </div>
        <div class="gname">{{ g.name }}<i v-if="g.menu" class="caret wide" /></div>
      </div>
    </section>
    <div class="options" />

    <main class="body">
      <aside class="panels">
        <div class="phead"><span>Properties</span><button class="ib" aria-label="Close"><svg viewBox="0 0 16 16" v-html="small.close" /></button></div>
        <div class="typebox">
          <div class="thumb">
            <svg viewBox="0 0 32 32"><path d="M2 2h18v28H2z" fill="#fff" stroke="#333b47" /><path d="M20 4h9v10h-9z" fill="#dfe3e8" stroke="#555d68" /><path d="M14 13h17v18H14z" fill="#fff" stroke="#333b47" /><path d="M5 4v8M8 4v8M11 4v8M14 4v7M17 4v7M4 16h8M4 19h8M4 22h8M4 25h8M4 28h8M17 15v14M20 15v14M23 15v14M26 15v14M29 15v14" stroke="#333b47" stroke-width="1.400" /></svg>
          </div>
          <span>Structural Plan</span><i class="caret wide" />
        </div>
        <div class="typerow">
          <label class="pick">
            <select v-model="typeName" aria-label="Type"><option>Structural Plan: Level</option></select>
            <svg viewBox="0 0 16 16"><path d="M3 5l5 5 5-5" fill="none" stroke="#555" stroke-width="1.300" /></svg>
          </label>
          <button class="etype"><svg viewBox="0 0 16 16" v-html="small.etype" />Edit Type</button>
        </div>
        <div class="grid">
          <div class="gridmain">
            <div class="ghead"><span>Graphics</span><svg viewBox="0 0 10 10"><path d="M2 5l3-3 3 3M2 9l3-3 3 3" fill="none" stroke="#222" stroke-width="1.400" /></svg></div>
            <table>
              <tbody>
                <tr v-for="p in props" :key="p[0]" :class="p[2]">
                  <th scope="row">{{ p[0] }}</th>
                  <td><button v-if="p[2] === 'action'" class="edit">{{ p[1] }}</button><template v-else>{{ p[1] }}</template></td>
                  <td class="assoc" />
                </tr>
              </tbody>
            </table>
          </div>
          <div class="vbar"><i class="chev u" /><div class="vthumb props" /><i class="chev d" /></div>
        </div>
        <div class="pfoot"><a href="#">Properties help</a><button class="apply" disabled>Apply</button></div>

        <div class="phead second"><span>Project Browser - Ahmad Akabnih -...</span><button class="ib" aria-label="Close"><svg viewBox="0 0 16 16" v-html="small.close" /></button></div>
        <div class="browser">
          <div class="tree">
            <div v-for="(n, i) in tree" :key="i" class="node">
              <span v-for="k in n.lvl" :key="k" class="guide" />
              <span class="branch" :class="{ last: n.last, root: n.lvl === 0 }"><b v-if="n.tog" class="tog" :class="{ plus: n.tog === '+' }" /></span>
              <svg v-if="n.lvl === 0" class="vico" viewBox="0 0 16 16" v-html="small.views" />
              <span class="nt" :class="n.cls">{{ n.t }}</span>
            </div>
            <div class="node"><span v-for="k in 3" :key="k" class="guide" /></div>
          </div>
          <div class="vbar"><i class="chev u" /><div class="vthumb tree-t" /><i class="chev d" /></div>
        </div>
        <div class="hbar"><i class="chev l" /><div class="hthumb" /><i class="chev r" /></div>
      </aside>

      <section class="work">
        <div class="docs">
          <button v-for="d in docs" :key="d.name" class="doc" :class="{ on: d.on }" :style="{ width: d.w + 'px' }">
            <svg viewBox="0 0 16 16" v-html="small[d.icon]" /><span>{{ d.name }}</span>
            <svg v-if="d.on" class="dx" viewBox="0 0 16 16" v-html="small.close" />
          </button>
          <button class="doclist" aria-label="Open views"><svg viewBox="0 0 16 16" v-html="small.custom" /></button>
        </div>
        <div class="stage">
          <div class="canvas">
            <svg class="drawing" viewBox="221 633 1683 804">
              <g class="ink">
                <path d="M440.500 731.500H1484.500V1427H440.500z" />
                <path v-for="s in gridDashes" :key="'g' + s[0]" :d="`M${s[0]} 1079.500H${s[1]}`" />
                <path d="M844.500 961.500H1081.500V1196.500H844.500z" />
                <path d="M882.500 990.500V1068Q882.500 1076.500 890.500 1076.500H1035.500Q1043.500 1076.500 1043.500 1068V990.500H1051.500V1167.500H1043.500V1091Q1043.500 1082.500 1035.500 1082.500H890.500Q882.500 1082.500 882.500 1091V1167.500H873.500V990.500z" />
                <path d="M910.500 1068.500V1076.500M1014.500 1068.500V1076.500M910.500 1082.500V1089.500H1014.500V1082.500" />
                <path d="M959.500 961V1068M966.500 961V1068M959.500 1089V1196M966.500 1089V1196M959.500 1019.500H966.500M959.500 1138.500H966.500M957 1015.500H960M966 1015.500H975M957 1157.500H960M966 1157.500H975M948.500 1060V1068M948.500 1090V1098" />
                <path v-for="x in [933, 991]" :key="'b' + x" :transform="`translate(${x} 0)`" d="M-5.500 1051.500H6.500V1057.500H-5.500zM-8.500 1057.500H9.500V1066.500H-8.500zM.5 1057V1066M-10.500 1066.500H11.500V1068M-10.500 1066.500V1068M-10.500 1089.500V1091.500H11.500V1089.500M-8.500 1091.500H9.500V1099.500H-8.500zM.5 1092V1099" />
              </g>
              <path class="soft" d="M911.500 639V1068.500H1014.500V639M957.500 639V1068M962.500 639V1068" />
              <g class="ink"><path v-for="s in axisDashes" :key="'a' + s[0]" :d="`M962.500 ${s[0]}V${s[1]}`" /></g>
              <g class="round">
                <g v-for="(c, i) in anchors" :key="i" :transform="`translate(${c[0] + 0.5} ${c[1]})`">
                  <circle r="10.500" /><circle r="6" /><path d="M-9 0L-5 -8H5L9 0 5 8H-5z" />
                </g>
                <circle cx="1739" cy="1079" r="75.500" />
                <path d="M587.500 817V880.500L843 962M586.500 1104V1165.500L959 1174.500M1327.500 677V731.500L1017 1025" />
              </g>
              <g><circle cx="843.500" cy="962.500" r="7.500" /><circle cx="959.500" cy="1174.500" r="7.500" /><circle cx="1017.500" cy="1025.500" r="7.500" /></g>
              <g v-for="d in across" :key="'h' + d.n + d.y" class="dimension">
                <path :d="`M${d.a} ${d.y + 0.5}H${d.b}` + d.p.map(p => `M${p + 0.5} ${d.y - 27}v54`).join('')" />
                <circle v-for="p in d.p" :key="p" :cx="p + 0.5" :cy="d.y" r="7.500" />
                <text :x="d.tx" :y="d.y - 13">{{ d.n }}</text>
              </g>
              <g v-for="d in upright" :key="'v' + d.n" class="dimension">
                <path :d="`M${d.x - 0.5} ${d.a}V${d.b}` + d.p.map(p => `M${d.x - 27} ${p + 0.5}h54`).join('')" />
                <circle v-for="p in d.p" :key="p" :cx="d.x + 0.5" :cy="p + 0.5" r="7.500" />
                <text :transform="`translate(${d.x - 13} ${d.ty}) rotate(-90)`">{{ d.n }}</text>
              </g>
              <path d="M532 725h110v12H532z" fill="#fff" />
              <g class="note">
                <template v-for="n in notes" :key="n.y"><text v-for="(l, i) in n.lines" :key="l" :x="n.x" :y="n.y + i * 42">{{ l }}</text></template>
                <text x="1325" y="639">Dutch Hooked Anchor</text>
              </g>
              <path d="M1100 600h450v35h-450z" fill="#fff" />
              <text class="bubble" x="1736" y="1104">1</text>
            </svg>
            <div class="navbar">
              <svg class="nx" viewBox="0 0 10 10"><circle cx="5" cy="5" r="4.500" fill="#aaa" /><path d="M3 3l4 4M7 3L3 7" stroke="#fff" /></svg>
              <svg class="wheel" viewBox="0 0 24 24"><path d="M10 1h9q3 0 3 3v13q0 2-3 4-4 2-8 2Q1 21 1 12 1 3 10 1z" fill="#eef0f3" stroke="#999" stroke-width="1.500" /><circle cx="11" cy="12" r="5" fill="#fff" stroke="#999" stroke-width="1.500" /><path d="M5 20l3-4M16 20l-2-4" stroke="#999" /></svg>
              <span class="twod">2D</span>
              <i class="caret gray" />
              <hr />
              <svg class="zoomer" viewBox="0 0 16 18"><path d="M1 1h10v11H1z" fill="#b5d6a4" stroke="#7fae6a" /><circle cx="10" cy="10" r="3" fill="#fff" stroke="#888" /><path d="M12 13l3 4" stroke="#888" stroke-width="2" /></svg>
              <i class="caret gray" />
              <svg class="nx foot" viewBox="0 0 10 10"><circle cx="5" cy="5" r="4.500" fill="#aaa" /><path d="M2 5h6" stroke="#fff" /></svg>
            </div>
          </div>
          <div class="vbar view"><i class="chev u" /><div class="vthumb mid" /><i class="chev d" /></div>
        </div>
        <div class="viewbar">
          <button class="scale">1 : 20</button>
          <button v-for="v in viewTools" :key="v" class="ib" :aria-label="v"><svg viewBox="0 0 16 16" v-html="small[v]" /></button>
          <div class="htrack"><div class="hmid" /><i class="chev r" /></div>
          <svg class="grip" viewBox="0 0 10 10"><path d="M7 1h2v2H7zM7 4h2v2H7zM7 7h2v2H7zM4 4h2v2H4zM4 7h2v2H4zM1 7h2v2H1z" fill="#bbb" /></svg>
        </div>
      </section>
    </main>

    <footer class="status">
      <div class="hint">Click to select, TAB for alternates, CTRL adds, SHIFT unselects.</div>
      <div class="sets">
        <button class="ib" aria-label="Worksets"><svg viewBox="0 0 16 16" v-html="small.workset" /></button>
        <label class="pick flat"><select aria-label="Active workset"><option></option></select><svg viewBox="0 0 16 16"><path d="M4 6l4 4 4-4" fill="none" stroke="#aaa" /></svg></label>
        <button class="ib wide" aria-label="Editing requests"><svg viewBox="0 0 16 16" v-html="small.editable" />:0</button>
        <button class="ib" aria-label="Design options"><svg viewBox="0 0 16 16" v-html="small.option" /></button>
        <button class="ib" aria-label="Add to set" disabled><svg viewBox="0 0 16 16" v-html="small.optoff" /></button>
        <label class="pick flat"><select v-model="optionSet" aria-label="Design option"><option>Main Model</option></select><svg viewBox="0 0 16 16"><path d="M4 6l4 4 4-4" fill="none" stroke="#aaa" /></svg></label>
      </div>
      <div class="selects">
        <button v-for="s in selectTools" :key="s" class="ib" :aria-label="s"><svg viewBox="0 0 16 16" v-html="small[s]" /></button>
        <button class="ib wide" aria-label="Filter"><svg viewBox="0 0 16 16" v-html="small.filter" />:0</button>
      </div>
    </footer>
  </div>
</template>

<style>
body { margin: 0; background: #fff; }
</style>

<style scoped>
.app { padding-top: 440px; font: 11px/16px "Noto Sans", "Open Sans", sans-serif; color: #3c3c3c; overflow: hidden; }
.app *, .app *::before, .app *::after { box-sizing: border-box; }
.defs { position: absolute; width: 0; height: 0; }
button, select { font: inherit; color: inherit; background: none; border: 0; padding: 0; margin: 0; }
svg { display: block; flex: none; }
.ib { width: 24px; height: 22px; display: flex; align-items: center; justify-content: center; flex: none; }
.ib svg { width: 16px; height: 16px; }
.drop { width: 12px; height: 22px; display: flex; align-items: center; justify-content: center; flex: none; }
.caret { border: 3px solid transparent; border-top: 4px solid #333; border-bottom: 0; width: 0; height: 0; flex: none; }
.caret.wide { border-width: 4px 4px 0; }
.caret.left { border: 4px solid transparent; border-right-color: #333; border-left: 0; }
.caret.up { border-top: 0; border-bottom: 3px solid #333; }
.caret.black { border-top-color: #000; }
.caret.gray { border-top-color: #999; }
.sep { width: 7px; height: 24px; border-left: 1px solid #b4b4b4; margin-left: 3px; margin-right: -3px; flex: none; }

.titlebar { display: flex; height: 29px; background: #ccc; }
.quick, .account, .wincontrols { display: flex; align-items: center; height: 24px; }
.home { margin-right: 5px; }
.quick { flex: none; width: 530px; }
.ib.on { background: #b9dcf8; border: 1px solid #1a6fc4; }
.title { flex: 1; text-align: center; padding: 2px 12px 0 0; white-space: nowrap; color: #444; }
.account { width: 280px; }
.account .left { margin-right: 4px; }
.uid { width: 84px; padding-left: 1px; color: #333; }
.account .cart { margin: 0 3px; }
.wincontrols { width: 73px; justify-content: space-between; }

.tabs { display: flex; height: 20px; background: #ccc; }
.tab { height: 20px; text-align: center; white-space: nowrap; flex: none; color: #444; }
.tab.file { width: 45px; margin-right: 3px; background: #2a7ab5; color: #fff; }
.tab.active { width: 84px; background: #eee; color: #222; }
.tab.fold { display: flex; align-items: center; gap: 4px; padding-left: 21px; }
.foldbox { width: 15px; height: 8px; border: 1px solid #333; border-radius: 2px; display: flex; align-items: center; justify-content: center; background: #eee; }

.ribbon { display: flex; height: 95px; background: #eee; padding-top: 1px; }
.group { flex: none; border-right: 1px solid #d9d9d9; display: flex; flex-direction: column; }
.group:last-child { border-right: 0; }
.tools { display: flex; justify-content: center; height: 76px; padding-top: 2px; }
.tool { position: relative; height: 72px; display: flex; flex-direction: column; align-items: center; flex: none; padding-top: 3px; }
.tool svg { width: 31px; height: 31px; margin-bottom: 4px; }
.tool.on { background: #b9d9f3; border: 1px solid #1a6fc4; padding-top: 2px; }
.tool.off { color: #b0b0b0; }
.tl { line-height: 15px; white-space: nowrap; }
.caret.below { margin-top: 2px; }
.caret.beside { position: absolute; right: 0; bottom: 15px; }
.gname { display: flex; justify-content: center; align-items: center; gap: 6px; height: 16px; white-space: nowrap; }
.options { height: 27px; background: #eee; border-top: 1px solid #ccc; }

.body { display: flex; }
.panels { width: 221px; flex: none; background: #eee; border-right: 2px solid #ccc; border-top: 2px solid #ccc; padding-left: 1px; display: flex; flex-direction: column; }
.phead { display: flex; justify-content: space-between; align-items: center; height: 20px; padding-left: 2px; white-space: nowrap; }
.phead svg { width: 13px; height: 13px; }
.phead .ib { width: 20px; height: 18px; }
.typebox { display: flex; align-items: center; height: 72px; border: 1px solid #ccc; margin-right: 2px; padding: 2px; }
.thumb { width: 67px; height: 66px; border: 1px solid #ccc; display: flex; align-items: center; justify-content: center; margin-right: 3px; }
.thumb svg { width: 32px; height: 32px; }
.typebox span { flex: 1; }
.typerow { display: flex; align-items: center; height: 25px; }
.pick { position: relative; display: flex; align-items: center; }
.pick select { appearance: none; width: 134px; height: 23px; border: 1px solid #adadad; background: #e1e1e1; padding: 0 16px 0 3px; color: #000; border-radius: 0; opacity: 1; }
.pick svg { position: absolute; right: 2px; width: 13px; height: 13px; pointer-events: none; }
.etype { display: flex; align-items: center; gap: 4px; padding-left: 6px; color: #111; }
.etype svg { width: 17px; height: 17px; }
.grid { display: flex; height: 277px; margin-right: 2px; }
.gridmain { flex: 1; background: #fff; overflow: hidden; color: #000; min-width: 0; }
.ghead { height: 18px; display: flex; justify-content: space-between; align-items: center; background: #dcdcdc; padding: 0 4px 0 2px; }
.ghead svg { width: 10px; height: 10px; }
table { width: 100%; table-layout: fixed; border-collapse: collapse; }
th, td { height: 18px; line-height: 15px; padding: 0 0 2px 2px; border-bottom: 1px dotted #777; border-right: 1px dotted #777; text-align: left; font-weight: 400; white-space: pre; overflow: hidden; }
th { width: 94px; padding-left: 8px; }
.assoc { width: 12px; }
tr.dim { color: #7c7c7c; }
tr.action td { padding: 0 0 0 1px; }
.edit { display: block; width: 100%; height: 16px; line-height: 13px; background: #e1e1e1; border: 1px solid #adadad; border-bottom-width: 2px; border-right-width: 2px; text-align: center; }
.vbar { width: 16px; flex: none; background: #f0f0f0; display: flex; flex-direction: column; align-items: center; padding: 6px 0 7px; }
.chev { width: 6px; height: 6px; border: solid #444; border-width: 2px 0 0 2px; transform: rotate(45deg); flex: none; }
.chev.d { transform: rotate(225deg); margin-top: auto; }
.chev.l { transform: rotate(-45deg); }
.chev.r { transform: rotate(135deg); margin-left: auto; }
.vthumb { width: 100%; background: #cdcdcd; margin-top: 5px; }
.vthumb.props { height: 78px; }
.vthumb.tree-t { height: 199px; }
.vthumb.mid { height: 17px; margin-top: 381px; }
.pfoot { display: flex; justify-content: space-between; height: 27px; padding: 2px 4px 0 2px; }
.pfoot a { color: #0a64c8; padding-top: 1px; }
.apply { width: 73px; height: 21px; background: #ccc; border: 1px solid #bfbfbf; color: #838383; }
.phead.second { border-top: 2px solid #ccc; height: 22px; }
.browser { display: flex; background: #fff; height: 383px; margin-right: 1px; }
.tree { flex: 1; min-width: 0; overflow: hidden; padding-left: 8px; color: #000; }
.node { display: flex; height: 18px; align-items: center; white-space: nowrap; }
.guide { width: 20px; height: 18px; border-left: 1px dotted #999; flex: none; }
.branch { position: relative; width: 18px; height: 18px; flex: none; }
.branch::before { content: ""; position: absolute; left: 0; top: 0; bottom: 0; border-left: 1px dotted #999; }
.branch.last::before { bottom: 8px; }
.branch.root::before { top: 9px; }
.branch::after { content: ""; position: absolute; left: 0; top: 10px; width: 15px; border-top: 1px dotted #999; }
.branch.root { width: 12px; }
.tog { position: absolute; z-index: 1; left: -4px; top: 6px; width: 9px; height: 9px; border: 1px solid #919191; border-radius: 1px; background: #fff; }
.tog::before { content: ""; position: absolute; left: 1px; top: 3px; width: 5px; height: 1px; background: #2a4a9a; }
.tog.plus::after { content: ""; position: absolute; left: 3px; top: 1px; width: 1px; height: 5px; background: #2a4a9a; }
.vico { width: 15px; height: 15px; z-index: 1; background: #fff; margin-right: 7px; }
.nt { line-height: 18px; }
.nt.picked { background: #e1e1e1; margin-left: -3px; padding: 0 4px 0 3px; }
.nt.current { font-weight: 700; }
.hbar { display: flex; align-items: center; height: 17px; padding: 0 24px 0 6px; }
.hthumb { width: 153px; height: 15px; background: #cdcdcd; margin-left: 5px; }

.work { flex: 1; min-width: 0; background: #fff; }
.docs { display: flex; height: 22px; background: #ccc; padding-top: 2px; }
.doc { display: flex; align-items: center; gap: 8px; height: 20px; padding-left: 5px; white-space: nowrap; flex: none; color: #444; }
.doc svg { width: 15px; height: 15px; }
.doc.on { background: #fff; font-weight: 700; color: #333; }
.doc .dx { width: 14px; height: 14px; margin: 0 3px 0 auto; }
.doclist { margin-left: auto; width: 16px; }
.doclist svg { width: 16px; height: 16px; }
.stage { display: flex; }
.canvas { position: relative; flex: 1; min-width: 0; }
.drawing { width: 100%; height: auto; }
.ink path { fill: none; stroke: #000; shape-rendering: crispEdges; }
.soft { fill: none; stroke: #808080; shape-rendering: crispEdges; }
.round circle, .round path { fill: none; stroke: #000; }
.dimension path { fill: none; stroke: #004080; shape-rendering: crispEdges; }
.dimension circle { fill: #004080; }
.dimension text { font: 300 34px Inter, sans-serif; fill: #004080; text-anchor: middle; }
.note text { font: 300 36px Inter, sans-serif; font-feature-settings: "cv11"; fill: #004080; text-anchor: middle; }
.bubble { font: 74px Inter, sans-serif; text-anchor: middle; }
.navbar { position: absolute; top: 2px; right: 2px; width: 34px; height: 118px; border: 2px solid #bbb; border-radius: 6px; background: #f4f4f4; display: flex; flex-direction: column; align-items: center; }
.navbar .nx { width: 9px; height: 9px; align-self: flex-end; margin: 1px 2px 0 0; }
.wheel { width: 22px; height: 22px; margin: 10px 2px 0 0; }
.twod { font-size: 10px; line-height: 10px; font-weight: 600; color: #4d86bd; align-self: flex-end; margin: -6px 2px 4px 0; }
.navbar hr { width: 26px; border: 0; border-top: 1px solid #bbb; margin: 4px 0 7px; }
.zoomer { width: 16px; height: 18px; margin-bottom: 8px; }
.navbar .foot { margin-top: auto; margin-bottom: 2px; }
.vbar.view { width: 15px; margin-top: 2px; }
.viewbar { display: flex; align-items: center; height: 17px; margin: 0 0 2px 2px; background: #f0f0f0; }
.scale { width: 76px; padding-left: 5px; color: #000; }
.viewbar .ib { width: 21px; height: 17px; }
.viewbar .ib svg { width: 16px; height: 16px; }
.htrack { flex: 1; display: flex; align-items: center; }
.hmid { width: 17px; height: 15px; background: #cdcdcd; margin-left: 49%; }
.grip { width: 10px; height: 10px; margin-left: 13px; align-self: flex-end; }

.status { display: flex; align-items: center; height: 22px; padding-top: 2px; background: #ccc; color: #000; }
.hint { width: 891px; padding-left: 2px; white-space: nowrap; }
.sets { display: flex; align-items: center; }
.sets > .ib:not(.wide) { width: 25px; }
.flat { margin-left: 4px; }
.flat select { width: 204px; height: 18px; border: 0; background: #fff; color: #888; }
.flat svg { right: 1px; width: 13px; }
.ib.wide { width: 58px; gap: 3px; justify-content: flex-start; padding-left: 8px; }
.selects { display: flex; margin-left: auto; padding-right: 60px; }
.selects .ib { width: 26px; }
.selects .wide { width: 40px; padding-left: 3px; gap: 1px; }
</style>
